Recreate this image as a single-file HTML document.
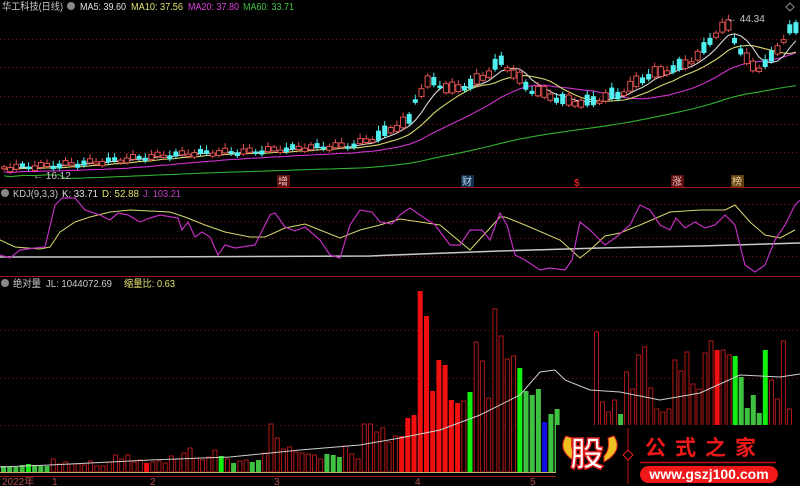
<!DOCTYPE html>
<html><head><meta charset="utf-8"><style>
html,body{margin:0;padding:0;background:#000;width:800px;height:486px;overflow:hidden}
svg{display:block}
text{font-family:"Liberation Sans","Noto Sans CJK SC",sans-serif}
</style></head><body>
<svg id="s" width="800" height="486" viewBox="0 0 800 486" xmlns="http://www.w3.org/2000/svg">
<rect width="800" height="486" fill="#000"/>
<g stroke="#7a1010" stroke-dasharray="1 3" stroke-width="1">
<line x1="0" y1="39.5" x2="800" y2="39.5"/><line x1="0" y1="67.5" x2="800" y2="67.5"/>
<line x1="0" y1="96.5" x2="800" y2="96.5"/><line x1="0" y1="124.5" x2="800" y2="124.5"/>
<line x1="0" y1="152.5" x2="800" y2="152.5"/>
<line x1="0" y1="204.5" x2="800" y2="204.5"/><line x1="0" y1="221.5" x2="800" y2="221.5"/>
<line x1="0" y1="238.5" x2="800" y2="238.5"/><line x1="0" y1="256.5" x2="800" y2="256.5"/>
<line x1="0" y1="330.5" x2="800" y2="330.5"/><line x1="0" y1="378.5" x2="800" y2="378.5"/>
<line x1="0" y1="425.5" x2="800" y2="425.5"/>
</g>
<line x1="0" y1="187.5" x2="800" y2="187.5" stroke="#a01818"/>
<line x1="0" y1="276.5" x2="800" y2="276.5" stroke="#a01818"/>
<line x1="0" y1="476.5" x2="800" y2="476.5" stroke="#a01818"/>
<g id="price"></g><g id="vol"></g>
<!-- KDJ -->
<polyline fill="none" stroke="#c8c8c8" stroke-width="1.5" points="0,257 120,257 370,256 420,254 500,251 600,248 700,246 800,243"/>
<polyline fill="none" stroke="#d8d870" stroke-width="1" points="0,240 15,247 40,249 50,247 60,232 75,222 90,217 110,212 130,210 150,211 170,212 185,217 205,225 225,232 250,237 265,237 285,228 305,224 320,230 340,238 360,230 380,225 400,219 420,222 440,225 470,250 500,217 505,217 525,225 560,240 580,258 590,250 605,236 620,233 640,225 670,212 700,210 725,210 735,205 750,222 765,235 780,238 795,230"/>
<polyline fill="none" stroke="#c030c0" stroke-width="1.2" points="0,255 10,258 20,250 35,248 45,247 55,205 62,198 75,198 85,210 100,215 110,220 118,213 128,215 140,222 150,218 160,215 178,218 182,230 188,222 195,237 202,232 210,237 218,255 225,245 235,248 255,245 270,215 275,213 285,227 295,231 305,227 320,240 330,255 340,258 350,225 360,210 372,212 380,222 392,224 400,215 410,208 420,215 435,225 450,245 460,245 470,230 482,230 490,240 500,213 507,225 515,255 525,260 540,270 550,268 565,270 572,260 580,222 590,230 605,245 615,238 630,225 640,205 650,210 660,225 670,230 676,218 685,228 695,222 705,228 715,225 725,215 735,225 745,265 755,272 765,265 775,240 785,225 795,205 800,200"/>
<polyline fill="none" stroke="#d0d0d0" stroke-width="1" id="vma" points="0,467 50,465 150,460 230,457 300,450 360,445 400,438 440,430 480,415 520,395 540,372 555,370 565,380 590,390 620,392 660,400 700,393 740,375 780,377 800,374"/>
<!-- markers -->
<g font-size="10">
<rect x="277" y="175" width="13" height="12" fill="#601010"/><text x="278" y="185" fill="#f0c0c0">增</text>
<rect x="461" y="175" width="13" height="12" fill="#103050"/><text x="462" y="185" fill="#c0d8f0">财</text>
<text x="574" y="186" fill="#e02020" font-weight="bold">$</text>
<rect x="671" y="175" width="13" height="12" fill="#601010"/><text x="672" y="185" fill="#f0c0c0">涨</text>
<rect x="731" y="175" width="13" height="12" fill="#604010"/><text x="732" y="185" fill="#f0d0a0">榜</text>
</g>
<!-- titles -->
<g font-size="10">
<text x="2" y="10" fill="#c8c8c8" textLength="61" lengthAdjust="spacingAndGlyphs">华工科技(日线)</text>
<circle cx="71" cy="6" r="4" fill="#888"/>
<text x="80" y="10" fill="#e0e0e0" textLength="46" lengthAdjust="spacingAndGlyphs">MA5: 39.60</text>
<text x="131" y="10" fill="#e0e070" textLength="52" lengthAdjust="spacingAndGlyphs">MA10: 37.56</text>
<text x="188" y="10" fill="#e040e0" textLength="51" lengthAdjust="spacingAndGlyphs">MA20: 37.80</text>
<text x="243" y="10" fill="#40c040" textLength="51" lengthAdjust="spacingAndGlyphs">MA60: 33.71</text>
<circle cx="5" cy="193" r="4" fill="#888"/>
<text x="13" y="197" fill="#c8c8c8" textLength="45" lengthAdjust="spacingAndGlyphs">KDJ(9,3,3)</text>
<text x="62" y="197" fill="#e0e0e0" textLength="36" lengthAdjust="spacingAndGlyphs">K: 33.71</text>
<text x="102" y="197" fill="#e0e070" textLength="37" lengthAdjust="spacingAndGlyphs">D: 52.88</text>
<text x="143" y="197" fill="#c040c0" textLength="38" lengthAdjust="spacingAndGlyphs">J: 103.21</text>
<circle cx="5" cy="283" r="4" fill="#888"/>
<text x="13" y="287" fill="#c8c8c8" textLength="28" lengthAdjust="spacingAndGlyphs">绝对量</text>
<text x="46" y="287" fill="#c8c8c8" textLength="66" lengthAdjust="spacingAndGlyphs">JL: 1044072.69</text>
<text x="124" y="287" fill="#e0e070" textLength="51" lengthAdjust="spacingAndGlyphs">缩量比: 0.63</text>
<text x="33" y="179" fill="#c8c8c8">← 16.12</text>
<text x="727" y="22" fill="#c8c8c8">← 44.34</text>
<path d="M790 3 l4 4 -4 4 -4 -4z" fill="none" stroke="#888"/>
</g>
<g font-size="10" fill="#b05050">
<text x="2" y="485">2022年</text><text x="52" y="485">1</text><text x="150" y="485">2</text>
<text x="274" y="485">3</text><text x="415" y="485">4</text><text x="530" y="485">5</text>
</g>
<!-- watermark -->
<rect x="556" y="425" width="244" height="61" fill="#000"/>
<path d="M566 436 q-8 12 4 22 l6 4 0 -6 q-6 -6 -4 -18z" fill="#f0c020" stroke="#e02020"/>
<path d="M614 436 q8 12 -4 22 l-6 4 0 -6 q6 -6 4 -18z" fill="#f0c020" stroke="#e02020"/>
<text x="570" y="466" font-size="34" font-weight="bold" fill="#fff" stroke="#e02020" stroke-width="1.5" font-family="'Noto Sans CJK SC',sans-serif">股</text>
<line x1="628" y1="428" x2="628" y2="484" stroke="#c01010"/>
<path d="M628 450 l5 5 -5 5 -5 -5z" fill="#000" stroke="#e02020"/>
<text x="645" y="455" font-size="21" font-weight="bold" fill="#f01818" letter-spacing="9" font-family="'Noto Sans CJK SC',sans-serif">公式之家</text>
<line x1="640" y1="462.5" x2="776" y2="462.5" stroke="#c01010" stroke-width="1.5"/>
<rect x="640" y="466" width="138" height="17" rx="8.5" fill="#f01818"/>
<text x="709" y="479" font-size="14" font-weight="bold" fill="#fff" text-anchor="middle">www.gszj100.com</text>
</svg>
<script>
(function(){
var NS="http://www.w3.org/2000/svg";
function el(p,t,a){var e=document.createElementNS(NS,t);for(var k in a)e.setAttribute(k,a[k]);p.appendChild(e);return e;}
var left=[[6,'g'],[6,'g'],[5,'g'],[7,'g'],[8,'G'],[7,'g'],[6,'g'],[6,'g'],[13,'r'],[8,'r'],[10,'r'],[8,'r'],[8,'r'],[7,'r'],[11,'r'],[6,'r'],[6,'r'],[10,'r'],[17,'r'],[13,'r'],[17,'r'],[10,'r'],[12,'r'],[9,'R'],[10,'r'],[11,'r'],[9,'r'],[16,'r'],[13,'r'],[19,'r'],[24,'r'],[14,'r'],[12,'r'],[15,'r'],[22,'r'],[16,'G'],[13,'r'],[9,'g'],[11,'r'],[12,'r'],[10,'g'],[12,'g'],[19,'r'],[48,'r'],[34,'r'],[23,'r'],[25,'r'],[20,'r'],[19,'r'],[18,'r'],[17,'r'],[13,'r'],[18,'g'],[17,'g'],[15,'g'],[26,'r'],[18,'r'],[13,'r'],[48,'r'],[48,'r'],[40,'r'],[44,'r'],[30,'r'],[36,'r'],[36,'R'],[54,'R'],[57,'R'],[181,'R'],[156,'R'],[81,'R'],[112,'R'],[107,'R'],[72,'R'],[69,'R'],[71,'r'],[80,'G'],[130,'r'],[111,'r'],[74,'r'],[163,'r'],[136,'r'],[113,'r'],[116,'r'],[104,'G'],[81,'g'],[77,'g'],[83,'g'],[50,'B'],[58,'g'],[63,'g']];
var right=[[140,'r'],[70,'r'],[60,'r'],[72,'r'],[58,'g'],[100,'r'],[83,'r'],[117,'r'],[125,'r'],[84,'r'],[63,'r'],[60,'r'],[63,'r'],[112,'r'],[101,'r'],[120,'r'],[88,'r'],[83,'r'],[119,'r'],[131,'r'],[122,'R'],[122,'r'],[117,'r'],[116,'G'],[95,'g'],[64,'g'],[77,'g'],[59,'g'],[122,'G'],[92,'r'],[73,'r'],[131,'r'],[63,'r']];
var vg=document.getElementById('vol'),base=472;
function bar(x,w,h,c){var a={x:x.toFixed(1),y:(base-h).toFixed(1),width:w.toFixed(1),height:h};
 if(c=='r'){a.fill='#000';a.stroke='#b01818';a['stroke-width']=1;a.x=(x+0.5).toFixed(1);a.width=(w-1).toFixed(1);}
 else a.fill={R:'#f01010',g:'#40c040',G:'#10f010',B:'#1010e0'}[c];
 el(vg,'rect',a);}
for(var i=0;i<left.length;i++)bar(1+i*6.22,5,left[i][0],left[i][1]);
for(var i=0;i<right.length;i++)bar(594+i*6.03,5,right[i][0],right[i][1]);
el(vg,'line',{x1:0,y1:472.5,x2:800,y2:472.5,stroke:'#c8b070','stroke-width':1});
document.getElementById('s').insertBefore(vg,document.getElementById('vma'));
var pts=[[0,168],[50,166],[100,162],[150,157],[200,153],[250,152],[300,148],[350,146],[370,140],[390,130],[410,120],[415,100],[430,80],[440,85],[450,90],[470,85],[490,72],[500,60],[510,70],[520,80],[530,90],[540,92],[560,100],[580,103],[600,100],[610,95],[620,95],[640,80],[650,75],[670,70],[690,62],[700,55],[710,40],[720,30],[730,25],[735,40],[740,50],[750,65],[760,68],[770,60],[780,45],[790,30],[800,28]];
function py(x){for(var k=1;k<pts.length;k++)if(x<=pts[k][0]){var a=pts[k-1],b=pts[k];return a[1]+(b[1]-a[1])*(x-a[0])/(b[0]-a[0]);}return 28;}
var pg=document.getElementById('price'),N=130,st=798/N,cl=[];
for(var i=0;i<N;i++){var x=1+i*st+st/2;cl.push(py(x)+Math.sin(i*1.7)*2);}
function ma(p){var r=[];for(var i=0;i<N;i++){var s=0,c=0;for(var j=Math.max(0,i-p+1);j<=i;j++){s+=cl[j];c++;}var v=s/c;if(p==60)v=v+(i<10?0:4);r.push(v);}return r;}
function line(arr,col,off){var s='';for(var i=0;i<N;i++)s+=(1+i*st+st/2).toFixed(1)+','+(arr[i]+off).toFixed(1)+' ';el(pg,'polyline',{points:s,fill:'none',stroke:col,'stroke-width':1.1});}
line(ma(60),'#30b030',8);line(ma(20),'#d030d0',4);line(ma(10),'#d8d870',1);line(ma(5),'#d8d8d8',0);
for(var i=0;i<N;i++){var x=1+i*st+st/2,c=cl[i],bh=2+Math.abs(Math.sin(i*2.3))*(i>60?9:3),up=Math.sin(i*1.3+0.5)>-0.2;
 var top=c-bh/2;el(pg,'line',{x1:x.toFixed(1),x2:x.toFixed(1),y1:(top-2-Math.abs(Math.sin(i))*3).toFixed(1),y2:(top+bh+2).toFixed(1),stroke:up?'#e05050':'#50f0f0'});
 var a={x:(x-2.5).toFixed(1),y:top.toFixed(1),width:5,height:bh.toFixed(1)};
 if(up){a.fill='#000';a.stroke='#e05050';}else a.fill='#50f0f0';el(pg,'rect',a);}
})();
</script>
</body></html>
